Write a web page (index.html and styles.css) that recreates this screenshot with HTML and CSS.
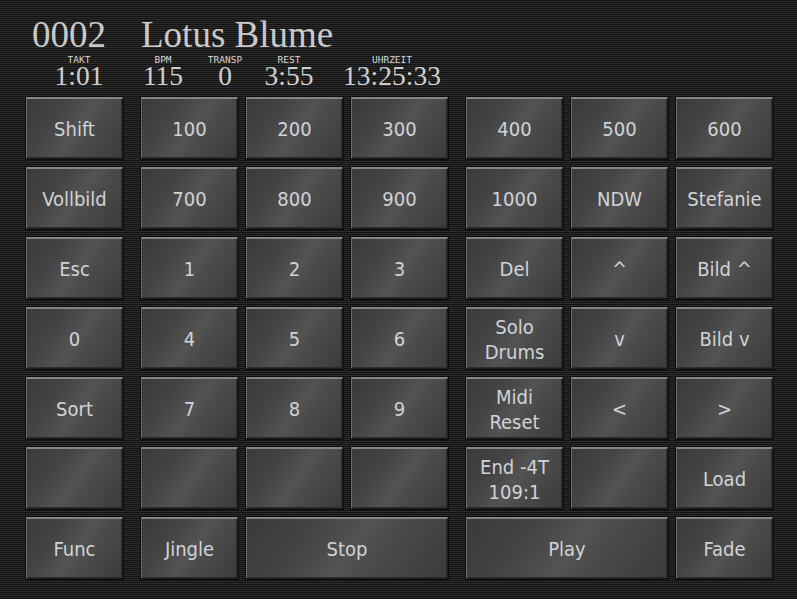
FILE: index.html
```html
<!DOCTYPE html>
<html>
<head>
<meta charset="utf-8">
<link rel="stylesheet" href="styles.css">
</head>
<body>
<div class="screen">
  <header class="header">
    <div class="title"><span class="num">0002</span><span class="name">Lotus Blume</span></div>
    <div class="stats">
      <div class="stat s1"><span class="lbl">TAKT</span><span class="val">1:01</span></div>
      <div class="stat s2"><span class="lbl">BPM</span><span class="val">115</span></div>
      <div class="stat s3"><span class="lbl">TRANSP</span><span class="val">0</span></div>
      <div class="stat s4"><span class="lbl">REST</span><span class="val">3:55</span></div>
      <div class="stat s5"><span class="lbl">UHRZEIT</span><span class="val">13:25:33</span></div>
    </div>
  </header>
  <main class="pad">
    <div class="group g1">
      <div class="btn">Shift</div>
      <div class="btn">Vollbild</div>
      <div class="btn">Esc</div>
      <div class="btn">0</div>
      <div class="btn">Sort</div>
      <div class="btn"></div>
      <div class="btn">Func</div>
    </div>
    <div class="group g3">
      <div class="btn">100</div><div class="btn">200</div><div class="btn">300</div>
      <div class="btn">700</div><div class="btn">800</div><div class="btn">900</div>
      <div class="btn">1</div><div class="btn">2</div><div class="btn">3</div>
      <div class="btn">4</div><div class="btn">5</div><div class="btn">6</div>
      <div class="btn">7</div><div class="btn">8</div><div class="btn">9</div>
      <div class="btn"></div><div class="btn"></div><div class="btn"></div>
      <div class="btn">Jingle</div><div class="btn span2">Stop</div>
    </div>
    <div class="group g3">
      <div class="btn">400</div><div class="btn">500</div><div class="btn">600</div>
      <div class="btn">1000</div><div class="btn">NDW</div><div class="btn">Stefanie</div>
      <div class="btn">Del</div><div class="btn">^</div><div class="btn">Bild ^</div>
      <div class="btn">Solo<br>Drums</div><div class="btn">v</div><div class="btn">Bild v</div>
      <div class="btn">Midi<br>Reset</div><div class="btn">&lt;</div><div class="btn">&gt;</div>
      <div class="btn">End -4T<br>109:1</div><div class="btn"></div><div class="btn">Load</div>
      <div class="btn span2">Play</div><div class="btn">Fade</div>
    </div>
  </main>
</div>
</body>
</html>
```
FILE: styles.css
```css
html, body {
  margin: 0;
  padding: 0;
}
body {
  width: 797px;
  height: 599px;
  overflow: hidden;
  background: repeating-linear-gradient(to bottom, #121212 0px, #121212 1px, #2d2d2d 1px, #2d2d2d 2px);
}
.screen {
  width: 797px;
  height: 599px;
}
.header {
  height: 97px;
  box-sizing: border-box;
  padding-top: 16px;
  color: #c9c9c9;
}
.title {
  display: flex;
  font-family: "Liberation Serif", "Times New Roman", serif;
  font-size: 37px;
  line-height: 37px;
  padding-left: 32px;
}
.title .num {
  width: 109px;
}
.stats {
  display: flex;
  padding-left: 40px;
  margin-top: 2px;
}
.stat {
  display: flex;
  flex-direction: column;
  align-items: center;
}
.s1 { width: 78px; }
.s2 { width: 90px; }
.s3 { width: 34px; }
.s4 { width: 94px; }
.s5 { width: 112px; }
.lbl {
  font-family: "DejaVu Sans Mono", monospace;
  font-size: 9.5px;
  line-height: 10px;
  height: 10px;
  color: #d6d6d6;
}
.val {
  font-family: "Liberation Serif", "Times New Roman", serif;
  font-size: 27.5px;
  line-height: 22px;
  height: 22px;
  color: #cfcfcf;
}
.pad {
  display: flex;
  gap: 18px;
  padding-left: 26px;
}
.group {
  display: grid;
  grid-template-rows: repeat(7, 62px);
  gap: 8px;
}
.g1 {
  grid-template-columns: 97px;
}
.g3 {
  grid-template-columns: repeat(3, 97px);
}
.span2 {
  grid-column: span 2;
}
.btn {
  display: flex;
  align-items: center;
  justify-content: center;
  text-align: center;
  box-sizing: border-box;
  padding-top: 2px;
  font-family: "DejaVu Sans Condensed", "DejaVu Sans", sans-serif;
  font-size: 20px;
  line-height: 25px;
  color: #d0d3d7;
  border-top: 2px solid #858585;
  border-left: 1px solid #6c6c6c;
  border-right: 1px solid #1e1e1e;
  border-bottom: 1px solid #1e1e1e;
  background: linear-gradient(125deg, #3a3a3a 0%, #444444 30%, #535353 52%, #4b4b4b 64%, #3b3b3b 100%);
  box-shadow: inset -1px -1px 0 #2c2c2c, 0 0 0 1px #0c0c0c;
}
```
